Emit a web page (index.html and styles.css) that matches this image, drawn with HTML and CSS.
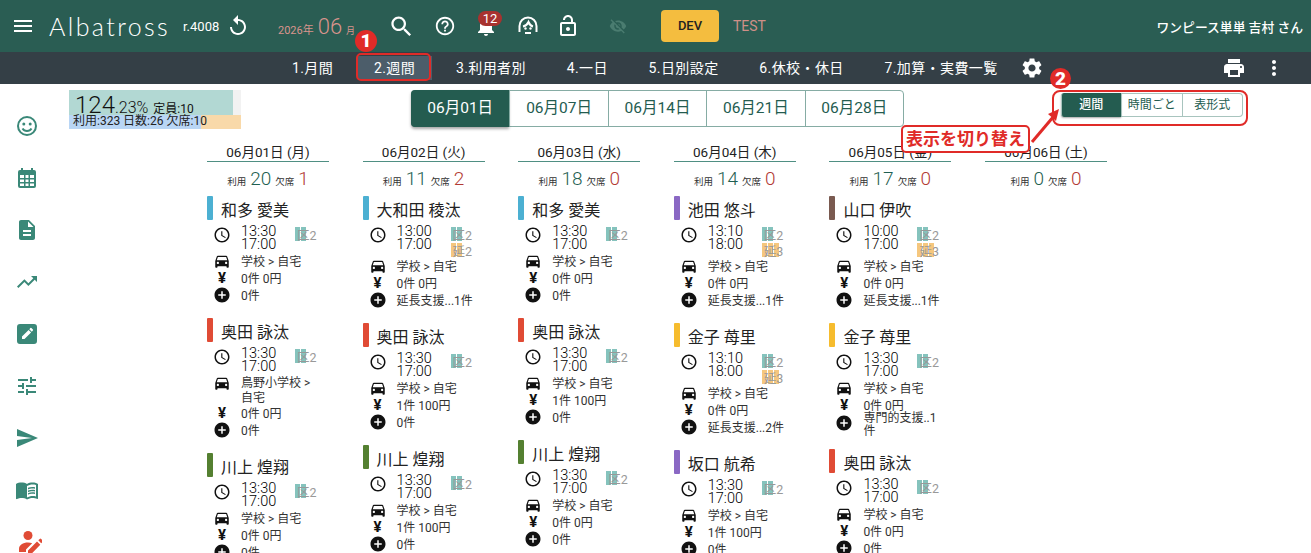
FILE: index.html
```html
<!DOCTYPE html>
<html lang="ja">
<head>
  <meta charset="UTF-8">
  <meta name="viewport" content="width=device-width, initial-scale=1.0">
  <title>Albatross 週間</title>
  <link rel="stylesheet" href="styles.css">
</head>
<body>
  <svg class="sprites" xmlns="http://www.w3.org/2000/svg">
    <symbol id="i-clock" viewBox="0 0 24 24"><path d="M11.99 2C6.47 2 2 6.48 2 12s4.47 10 9.99 10C17.52 22 22 17.52 22 12S17.52 2 11.99 2zM12 20c-4.42 0-8-3.58-8-8s3.58-8 8-8 8 3.58 8 8-3.58 8-8 8zm.5-13H11v6l5.25 3.15.75-1.23-4.5-2.67z"/></symbol>
    <symbol id="i-car" viewBox="0 0 24 24"><path d="M18.92 6.01C18.72 5.42 18.16 5 17.5 5h-11c-.66 0-1.21.42-1.42 1.01L3 12v8c0 .55.45 1 1 1h1c.55 0 1-.45 1-1v-1h12v1c0 .55.45 1 1 1h1c.55 0 1-.45 1-1v-8l-2.08-5.99zM6.5 16c-.83 0-1.5-.67-1.5-1.5S5.67 13 6.5 13s1.5.67 1.5 1.5S7.33 16 6.5 16zm11 0c-.83 0-1.5-.67-1.5-1.5s.67-1.5 1.5-1.5 1.5.67 1.5 1.5-.67 1.5-1.5 1.5zM5 11l1.5-4.5h11L19 11H5z"/></symbol>
    <symbol id="i-plus" viewBox="0 0 24 24"><path d="M12 2C6.48 2 2 6.48 2 12s4.48 10 10 10 10-4.48 10-10S17.52 2 12 2zm5 11h-4v4h-2v-4H7v-2h4V7h2v4h4v2z"/></symbol>
  </svg>

  <header class="topbar">
    <svg class="ico menu-ico" viewBox="0 0 24 24"><path d="M3 18h18v-2H3v2zm0-5h18v-2H3v2zm0-7v2h18V6H3z"/></svg>
    <span class="logo">Albatross</span>
    <span class="rev">r.4008</span>
    <svg class="ico reload-ico" viewBox="0 0 24 24"><path d="M12 5V1L7 6l5 5V7c3.31 0 6 2.69 6 6s-2.69 6-6 6-6-2.69-6-6H4c0 4.42 3.58 8 8 8s8-3.58 8-8-3.58-8-8-8z"/></svg>
    <span class="month"><span class="month-y">2026年</span> <span class="month-m">06</span> <span class="month-u">月</span></span>
    <svg class="ico search-ico" viewBox="0 0 24 24"><path d="M15.5 14h-.79l-.28-.27C15.41 12.59 16 11.11 16 9.5 16 5.91 13.09 3 9.5 3S3 5.91 3 9.5 5.91 16 9.5 16c1.61 0 3.09-.59 4.23-1.57l.27.28v.79l5 4.99L20.49 19l-4.99-5zm-6 0C7.01 14 5 11.99 5 9.5S7.01 5 9.5 5 14 7.01 14 9.5 11.99 14 9.5 14z"/></svg>
    <svg class="ico help-ico" viewBox="0 0 24 24"><path d="M11 18h2v-2h-2v2zm1-16C6.48 2 2 6.48 2 12s4.48 10 10 10 10-4.48 10-10S17.52 2 12 2zm0 18c-4.41 0-8-3.59-8-8s3.59-8 8-8 8 3.59 8 8-3.59 8-8 8zm0-14c-2.21 0-4 1.79-4 4h2c0-1.1.9-2 2-2s2 .9 2 2c0 2-3 1.75-3 5h2c0-2.25 3-2.5 3-5 0-2.21-1.79-4-4-4z"/></svg>
    <span class="bell">
      <svg class="ico" viewBox="0 0 24 24"><path d="M12 22c1.1 0 2-.9 2-2h-4c0 1.1.89 2 2 2zm6-6v-5c0-3.07-1.64-5.64-4.5-6.32V4c0-.83-.67-1.5-1.5-1.5s-1.5.67-1.5 1.5v.68C7.63 5.36 6 7.92 6 11v5l-2 2v1h16v-1l-2-2z"/></svg>
      <span class="bell-count">12</span>
    </span>
    <svg class="ico agent-ico" viewBox="0 0 24 24"><path class="line" d="M3.500 18v-6a8.500 8.500 0 0 1 17 0v6M7 12.500c2.500-.5 4.500-2.200 5.500-4.500 1 2.300 2.500 4 4.500 4.500M9 19h6"/><circle cx="9.500" cy="14.500" r="1.200"/><circle cx="14.500" cy="14.500" r="1.200"/></svg>
    <svg class="ico lock-ico" viewBox="0 0 24 24"><path d="M12 17c1.100 0 2-.9 2-2s-.9-2-2-2-2 .9-2 2 .9 2 2 2zm6-9h-1V6c0-2.760-2.240-5-5-5S7 3.240 7 6h2c0-1.660 1.340-3 3-3s3 1.340 3 3v2H6c-1.100 0-2 .9-2 2v10c0 1.100.9 2 2 2h12c1.100 0 2-.9 2-2V10c0-1.100-.9-2-2-2zm0 12H6V10h12v10z"/></svg>
    <svg class="ico eye-ico" viewBox="0 0 24 24"><path d="M12 7c2.760 0 5 2.240 5 5 0 .65-.13 1.260-.36 1.830l2.920 2.920c1.510-1.260 2.700-2.890 3.430-4.750-1.730-4.390-6-7.500-11-7.500-1.400 0-2.740.25-3.980.7l2.160 2.160C10.740 7.130 11.350 7 12 7zM2 4.270l2.280 2.280.46.46C3.080 8.300 1.780 10.020 1 12c1.730 4.390 6 7.500 11 7.500 1.550 0 3.030-.3 4.380-.84l.42.42L19.730 22 21 20.730 3.270 3 2 4.270zM7.530 9.800l1.550 1.550c-.05.21-.08.43-.08.65 0 1.660 1.340 3 3 3 .22 0 .44-.03.65-.08l1.550 1.550c-.67.33-1.410.53-2.200.53-2.760 0-5-2.240-5-5 0-.79.2-1.530.53-2.200zm4.310-.78l3.150 3.150.02-.16c0-1.660-1.340-3-3-3l-.17.01z"/></svg>
    <span class="dev-btn">DEV</span>
    <span class="test-link">TEST</span>
    <span class="user">ワンピース単単 吉村 さん</span>
  </header>

  <nav class="subnav">
    <a class="subnav-item">1.月間</a>
    <a class="subnav-item is-current">2.週間</a>
    <a class="subnav-item">3.利用者別</a>
    <a class="subnav-item">4.一日</a>
    <a class="subnav-item">5.日別設定</a>
    <a class="subnav-item">6.休校・休日</a>
    <a class="subnav-item">7.加算・実費一覧</a>
    <svg class="ico gear-ico" viewBox="0 0 24 24"><path d="M19.140 12.940c.04-.3.06-.61.06-.94 0-.32-.02-.64-.07-.94l2.030-1.580c.18-.14.23-.41.12-.61l-1.920-3.320c-.12-.22-.37-.29-.59-.22l-2.390.96c-.5-.38-1.030-.7-1.620-.94l-.36-2.540c-.04-.24-.24-.41-.48-.41h-3.840c-.24 0-.43.17-.47.41l-.36 2.540c-.59.24-1.130.57-1.620.94l-2.390-.96c-.22-.08-.47 0-.59.22L2.740 8.870c-.12.21-.08.47.12.61l2.030 1.580c-.05.3-.09.63-.09.94s.02.64.07.94l-2.030 1.580c-.18.14-.23.41-.12.61l1.920 3.320c.12.22.37.29.59.22l2.390-.96c.5.38 1.030.7 1.620.94l.36 2.540c.05.24.24.41.48.41h3.840c.24 0 .44-.17.47-.41l.36-2.540c.59-.24 1.130-.56 1.620-.94l2.390.96c.22.08.47 0 .59-.22l1.920-3.320c.12-.22.07-.47-.12-.61l-2.010-1.580zM12 15.600c-1.980 0-3.600-1.620-3.600-3.600s1.620-3.600 3.600-3.600 3.600 1.620 3.600 3.600-1.620 3.600-3.600 3.600z"/></svg>
    <svg class="ico print-ico" viewBox="0 0 24 24"><path d="M19 8H5c-1.660 0-3 1.340-3 3v6h4v4h12v-4h4v-6c0-1.660-1.340-3-3-3zm-3 11H8v-5h8v5zm3-7c-.55 0-1-.45-1-1s.45-1 1-1 1 .45 1 1-.45 1-1 1zm-1-9H6v4h12V3z"/></svg>
    <svg class="ico more-ico" viewBox="0 0 24 24"><path d="M12 8c1.100 0 2-.9 2-2s-.9-2-2-2-2 .9-2 2 .9 2 2 2zm0 2c-1.100 0-2 .9-2 2s.9 2 2 2 2-.9 2-2-.9-2-2-2zm0 6c-1.100 0-2 .9-2 2s.9 2 2 2 2-.9 2-2-.9-2-2-2z"/></svg>
  </nav>

  <div class="layout">
    <aside class="sidebar">
      <svg class="side-ico" viewBox="0 0 24 24"><circle class="line" cx="12" cy="12" r="9"/><circle cx="8.800" cy="10" r="1.500"/><circle cx="15.200" cy="10" r="1.500"/><path class="line" d="M7.500 14.500c1 1.700 2.600 2.500 4.500 2.500s3.500-.8 4.500-2.500"/></svg>
      <svg class="side-ico" viewBox="0 0 24 24"><path d="M5 4h1V2h2v2h8V2h2v2h1a2 2 0 0 1 2 2v14a2 2 0 0 1-2 2H5a2 2 0 0 1-2-2V6a2 2 0 0 1 2-2zm0 5v3h4V9H5zm5.500 0v3h3V9h-3zm4.500 0v3h4V9h-4zM5 13.500V16h4v-2.500H5zm5.500 0V16h3v-2.500h-3zm4.500 0V16h4v-2.500h-4zM5 17.500V20h4v-2.500H5zm5.500 0V20h3v-2.500h-3zm4.500 0V20h4v-2.500h-4z"/></svg>
      <svg class="side-ico" viewBox="0 0 24 24"><path d="M14 2H6c-1.100 0-1.990.9-1.990 2L4 20c0 1.100.89 2 1.990 2H18c1.100 0 2-.9 2-2V8l-6-6zm2 16H8v-2h8v2zm0-4H8v-2h8v2zm-3-5V3.500L18.500 9H13z"/></svg>
      <svg class="side-ico" viewBox="0 0 24 24"><path d="M16 6l2.290 2.290-4.880 4.880-4-4L2 16.590 3.410 18l6-6 4 4 6.300-6.290L22 12V6z"/></svg>
      <svg class="side-ico" viewBox="0 0 24 24"><path fill-rule="evenodd" d="M5 2h14a3 3 0 0 1 3 3v14a3 3 0 0 1-3 3H5a3 3 0 0 1-3-3V5a3 3 0 0 1 3-3zm2 12.500V17h2.500l6.600-6.600-2.500-2.500L7 14.500zm10.900-5.900a.7.7 0 0 0 0-1l-1.500-1.500a.7.7 0 0 0-1 0l-1.100 1.100 2.500 2.500 1.100-1.100z"/></svg>
      <svg class="side-ico" viewBox="0 0 24 24"><path d="M3 17v2h6v-2H3zM3 5v2h10V5H3zm10 16v-2h8v-2h-8v-2h-2v6h2zM7 9v2H3v2h4v2h2V9H7zm14 4v-2H11v2h10zm-6-4h2V7h4V5h-4V3h-2v6z"/></svg>
      <svg class="side-ico" viewBox="0 0 24 24"><path d="M2.010 21L23 12 2.010 3 2 10l15 2-15 2z"/></svg>
      <svg class="side-ico" viewBox="0 0 24 24"><path d="M21 5c-1.110-.35-2.330-.5-3.500-.5-1.950 0-4.050.4-5.500 1.500-1.450-1.100-3.550-1.500-5.500-1.500S2.450 4.900 1 6v14.650c0 .25.25.5.5.5.1 0 .15-.05.25-.05C3.100 20.450 5.050 20 6.500 20c1.950 0 4.050.4 5.500 1.500 1.350-.85 3.800-1.500 5.500-1.500 1.650 0 3.350.3 4.750 1.050.1.05.15.05.25.05.25 0 .5-.25.5-.5V6c-.6-.45-1.250-.75-2-1zm0 13.500c-1.100-.35-2.300-.5-3.500-.5-1.700 0-4.150.65-5.500 1.500V8c1.350-.85 3.800-1.500 5.500-1.500 1.200 0 2.400.15 3.500.5v11.500z"/><path d="M17.500 10.500c.88 0 1.730.09 2.500.26V9.240c-.79-.15-1.640-.24-2.500-.24-1.700 0-3.240.29-4.500.83v1.660c1.130-.64 2.700-.99 4.500-.99zM13 12.490v1.660c1.130-.64 2.700-.99 4.500-.99.88 0 1.730.09 2.500.26V11.900c-.79-.15-1.640-.24-2.500-.24-1.700 0-3.240.3-4.500.83zM17.500 14.330c-1.700 0-3.240.29-4.500.83v1.660c1.130-.64 2.700-.99 4.500-.99.88 0 1.730.09 2.500.26v-1.520c-.79-.16-1.640-.24-2.500-.24z"/></svg>
      <svg class="side-ico side-ico-red" viewBox="0 0 24 24"><circle cx="10" cy="5.500" r="4.500"/><path d="M1 22v-3c0-4 4-6.500 9-6.500 1.500 0 3 .2 4.200.7L8 19.500V22H1zM10 24v-3.500l9-9 3.300 3.300-9 9.200H10zM20.300 10.300l1.400-1.400a1 1 0 0 1 1.400 0l1.500 1.500a1 1 0 0 1 0 1.400l-1.400 1.400-2.900-2.900z"/></svg>
    </aside>

    <main class="content">
      <div class="toolbar">
        <div class="summary">
          <div class="summary-top">
            <div class="summary-fill"></div>
            <div class="summary-text"><span class="rate">124</span><span class="rate-sub">.23%</span> <span class="rate-cap">定員:10</span></div>
          </div>
          <div class="summary-bottom">
            <div class="summary-used"></div>
            <div class="summary-rest"></div>
            <div class="summary-text2">利用:323 日数:26 欠席:10</div>
          </div>
        </div>
        <div class="week-tabs">
          <a class="week-tab is-active">06月01日</a>
          <a class="week-tab">06月07日</a>
          <a class="week-tab">06月14日</a>
          <a class="week-tab">06月21日</a>
          <a class="week-tab">06月28日</a>
        </div>
        <div class="view-switch">
          <a class="view-tab is-active">週間</a>
          <a class="view-tab">時間ごと</a>
          <a class="view-tab">表形式</a>
        </div>
      </div>

      <div class="week">
        <section class="day">
          <div class="day-head">06月01日 (月)</div>
          <div class="day-stat"><small>利用</small> <b class="ok">20</b> <small>欠席</small> <b class="ng">1</b></div>

          <article class="kid">
            <h3 class="kid-name"><i class="tag c-blue"></i>和多 愛美</h3>
            <div class="kid-time"><svg class="row-ico"><use href="#i-clock"/></svg><span class="times">13:30<br>17:00</span><span class="marks"><span class="mark m-ku">区2</span></span></div>
            <div class="kid-row"><svg class="row-ico"><use href="#i-car"/></svg><span>学校 &gt; 自宅</span></div>
            <div class="kid-row"><span class="row-yen">¥</span><span>0件 0円</span></div>
            <div class="kid-row"><svg class="row-ico"><use href="#i-plus"/></svg><span>0件</span></div>
          </article>

          <article class="kid">
            <h3 class="kid-name"><i class="tag c-red"></i>奥田 詠汰</h3>
            <div class="kid-time"><svg class="row-ico"><use href="#i-clock"/></svg><span class="times">13:30<br>17:00</span><span class="marks"><span class="mark m-ku">区2</span></span></div>
            <div class="kid-row kid-row-wrap"><svg class="row-ico"><use href="#i-car"/></svg><span>鳥野小学校 &gt; 自宅</span></div>
            <div class="kid-row"><span class="row-yen">¥</span><span>0件 0円</span></div>
            <div class="kid-row"><svg class="row-ico"><use href="#i-plus"/></svg><span>0件</span></div>
          </article>

          <article class="kid">
            <h3 class="kid-name"><i class="tag c-green"></i>川上 煌翔</h3>
            <div class="kid-time"><svg class="row-ico"><use href="#i-clock"/></svg><span class="times">13:30<br>17:00</span><span class="marks"><span class="mark m-ku">区2</span></span></div>
            <div class="kid-row"><svg class="row-ico"><use href="#i-car"/></svg><span>学校 &gt; 自宅</span></div>
            <div class="kid-row"><span class="row-yen">¥</span><span>0件 0円</span></div>
            <div class="kid-row"><svg class="row-ico"><use href="#i-plus"/></svg><span>0件</span></div>
          </article>
        </section>

        <section class="day">
          <div class="day-head">06月02日 (火)</div>
          <div class="day-stat"><small>利用</small> <b class="ok">11</b> <small>欠席</small> <b class="ng">2</b></div>

          <article class="kid">
            <h3 class="kid-name"><i class="tag c-blue"></i>大和田 稜汰</h3>
            <div class="kid-time"><svg class="row-ico"><use href="#i-clock"/></svg><span class="times">13:00<br>17:00</span><span class="marks"><span class="mark m-ku">区2</span><span class="mark m-en2">延2</span></span></div>
            <div class="kid-row"><svg class="row-ico"><use href="#i-car"/></svg><span>学校 &gt; 自宅</span></div>
            <div class="kid-row"><span class="row-yen">¥</span><span>0件 0円</span></div>
            <div class="kid-row"><svg class="row-ico"><use href="#i-plus"/></svg><span>延長支援...1件</span></div>
          </article>

          <article class="kid">
            <h3 class="kid-name"><i class="tag c-red"></i>奥田 詠汰</h3>
            <div class="kid-time"><svg class="row-ico"><use href="#i-clock"/></svg><span class="times">13:30<br>17:00</span><span class="marks"><span class="mark m-ku">区2</span></span></div>
            <div class="kid-row"><svg class="row-ico"><use href="#i-car"/></svg><span>学校 &gt; 自宅</span></div>
            <div class="kid-row"><span class="row-yen">¥</span><span>1件 100円</span></div>
            <div class="kid-row"><svg class="row-ico"><use href="#i-plus"/></svg><span>0件</span></div>
          </article>

          <article class="kid">
            <h3 class="kid-name"><i class="tag c-green"></i>川上 煌翔</h3>
            <div class="kid-time"><svg class="row-ico"><use href="#i-clock"/></svg><span class="times">13:30<br>17:00</span><span class="marks"><span class="mark m-ku">区2</span></span></div>
            <div class="kid-row"><svg class="row-ico"><use href="#i-car"/></svg><span>学校 &gt; 自宅</span></div>
            <div class="kid-row"><span class="row-yen">¥</span><span>1件 100円</span></div>
            <div class="kid-row"><svg class="row-ico"><use href="#i-plus"/></svg><span>0件</span></div>
          </article>
        </section>

        <section class="day">
          <div class="day-head">06月03日 (水)</div>
          <div class="day-stat"><small>利用</small> <b class="ok">18</b> <small>欠席</small> <b class="ng">0</b></div>

          <article class="kid">
            <h3 class="kid-name"><i class="tag c-blue"></i>和多 愛美</h3>
            <div class="kid-time"><svg class="row-ico"><use href="#i-clock"/></svg><span class="times">13:30<br>17:00</span><span class="marks"><span class="mark m-ku">区2</span></span></div>
            <div class="kid-row"><svg class="row-ico"><use href="#i-car"/></svg><span>学校 &gt; 自宅</span></div>
            <div class="kid-row"><span class="row-yen">¥</span><span>0件 0円</span></div>
            <div class="kid-row"><svg class="row-ico"><use href="#i-plus"/></svg><span>0件</span></div>
          </article>

          <article class="kid">
            <h3 class="kid-name"><i class="tag c-red"></i>奥田 詠汰</h3>
            <div class="kid-time"><svg class="row-ico"><use href="#i-clock"/></svg><span class="times">13:30<br>17:00</span><span class="marks"><span class="mark m-ku">区2</span></span></div>
            <div class="kid-row"><svg class="row-ico"><use href="#i-car"/></svg><span>学校 &gt; 自宅</span></div>
            <div class="kid-row"><span class="row-yen">¥</span><span>1件 100円</span></div>
            <div class="kid-row"><svg class="row-ico"><use href="#i-plus"/></svg><span>0件</span></div>
          </article>

          <article class="kid">
            <h3 class="kid-name"><i class="tag c-green"></i>川上 煌翔</h3>
            <div class="kid-time"><svg class="row-ico"><use href="#i-clock"/></svg><span class="times">13:30<br>17:00</span><span class="marks"><span class="mark m-ku">区2</span></span></div>
            <div class="kid-row"><svg class="row-ico"><use href="#i-car"/></svg><span>学校 &gt; 自宅</span></div>
            <div class="kid-row"><span class="row-yen">¥</span><span>0件 0円</span></div>
            <div class="kid-row"><svg class="row-ico"><use href="#i-plus"/></svg><span>0件</span></div>
          </article>
        </section>

        <section class="day">
          <div class="day-head">06月04日 (木)</div>
          <div class="day-stat"><small>利用</small> <b class="ok">14</b> <small>欠席</small> <b class="ng">0</b></div>

          <article class="kid">
            <h3 class="kid-name"><i class="tag c-purple"></i>池田 悠斗</h3>
            <div class="kid-time"><svg class="row-ico"><use href="#i-clock"/></svg><span class="times">13:10<br>18:00</span><span class="marks"><span class="mark m-ku">区2</span><span class="mark m-en3">延3</span></span></div>
            <div class="kid-row"><svg class="row-ico"><use href="#i-car"/></svg><span>学校 &gt; 自宅</span></div>
            <div class="kid-row"><span class="row-yen">¥</span><span>0件 0円</span></div>
            <div class="kid-row"><svg class="row-ico"><use href="#i-plus"/></svg><span>延長支援...1件</span></div>
          </article>

          <article class="kid">
            <h3 class="kid-name"><i class="tag c-yellow"></i>金子 苺里</h3>
            <div class="kid-time"><svg class="row-ico"><use href="#i-clock"/></svg><span class="times">13:10<br>18:00</span><span class="marks"><span class="mark m-ku">区2</span><span class="mark m-en3">延3</span></span></div>
            <div class="kid-row"><svg class="row-ico"><use href="#i-car"/></svg><span>学校 &gt; 自宅</span></div>
            <div class="kid-row"><span class="row-yen">¥</span><span>0件 0円</span></div>
            <div class="kid-row"><svg class="row-ico"><use href="#i-plus"/></svg><span>延長支援...2件</span></div>
          </article>

          <article class="kid">
            <h3 class="kid-name"><i class="tag c-purple"></i>坂口 航希</h3>
            <div class="kid-time"><svg class="row-ico"><use href="#i-clock"/></svg><span class="times">13:30<br>17:00</span><span class="marks"><span class="mark m-ku">区2</span></span></div>
            <div class="kid-row"><svg class="row-ico"><use href="#i-car"/></svg><span>学校 &gt; 自宅</span></div>
            <div class="kid-row"><span class="row-yen">¥</span><span>1件 100円</span></div>
            <div class="kid-row"><svg class="row-ico"><use href="#i-plus"/></svg><span>0件</span></div>
          </article>
        </section>

        <section class="day">
          <div class="day-head">06月05日 (金)</div>
          <div class="day-stat"><small>利用</small> <b class="ok">17</b> <small>欠席</small> <b class="ng">0</b></div>

          <article class="kid">
            <h3 class="kid-name"><i class="tag c-brown"></i>山口 伊吹</h3>
            <div class="kid-time"><svg class="row-ico"><use href="#i-clock"/></svg><span class="times">10:00<br>17:00</span><span class="marks"><span class="mark m-ku">区2</span><span class="mark m-en3">延3</span></span></div>
            <div class="kid-row"><svg class="row-ico"><use href="#i-car"/></svg><span>学校 &gt; 自宅</span></div>
            <div class="kid-row"><span class="row-yen">¥</span><span>0件 0円</span></div>
            <div class="kid-row"><svg class="row-ico"><use href="#i-plus"/></svg><span>延長支援...1件</span></div>
          </article>

          <article class="kid">
            <h3 class="kid-name"><i class="tag c-yellow"></i>金子 苺里</h3>
            <div class="kid-time"><svg class="row-ico"><use href="#i-clock"/></svg><span class="times">13:30<br>17:00</span><span class="marks"><span class="mark m-ku">区2</span></span></div>
            <div class="kid-row"><svg class="row-ico"><use href="#i-car"/></svg><span>学校 &gt; 自宅</span></div>
            <div class="kid-row"><span class="row-yen">¥</span><span>0件 0円</span></div>
            <div class="kid-row kid-row-tight"><svg class="row-ico"><use href="#i-plus"/></svg><span>専門的支援..1件</span></div>
          </article>

          <article class="kid">
            <h3 class="kid-name"><i class="tag c-red"></i>奥田 詠汰</h3>
            <div class="kid-time"><svg class="row-ico"><use href="#i-clock"/></svg><span class="times">13:30<br>17:00</span><span class="marks"><span class="mark m-ku">区2</span></span></div>
            <div class="kid-row"><svg class="row-ico"><use href="#i-car"/></svg><span>学校 &gt; 自宅</span></div>
            <div class="kid-row"><span class="row-yen">¥</span><span>0件 0円</span></div>
            <div class="kid-row"><svg class="row-ico"><use href="#i-plus"/></svg><span>0件</span></div>
          </article>
        </section>

        <section class="day">
          <div class="day-head">06月06日 (土)</div>
          <div class="day-stat"><small>利用</small> <b class="ok">0</b> <small>欠席</small> <b class="ng">0</b></div>
        </section>
      </div>
    </main>
  </div>

  <!-- 注釈 (説明用の赤い書き込み) -->
  <span class="note-num note-num-1">1</span>
  <span class="note-ring note-ring-1"></span>
  <span class="note-num note-num-2">2</span>
  <span class="note-ring note-ring-2"></span>
  <span class="note-label">表示を切り替え</span>
  <svg class="note-arrow" viewBox="0 0 32 36"><path d="M2 34L24 8" /><path class="arrow-head" d="M29 1l-11 5 8 7z"/></svg>
</body>
</html>
```

FILE: styles.css
```css
* {
  box-sizing: border-box;
}

html, body {
  margin: 0;
  padding: 0;
  height: 100%;
  overflow: hidden;
  background-color: #fff;
  color: #222;
  font-family: Roboto, "Noto Sans CJK JP", sans-serif;
}

.sprites {
  display: none;
}

.ico {
  display: block;
  flex-shrink: 0;
  fill: #fff;
}

.ico .line,
.side-ico .line {
  fill: none;
  stroke: currentColor;
  stroke-width: 2;
}

/* header */
.topbar {
  display: flex;
  align-items: center;
  height: 52px;
  padding-left: 11px;
  background-color: #2a5d53;
  color: #fff;
}

.menu-ico { width: 24px; height: 24px; }

.logo {
  flex-shrink: 0;
  width: 134px;
  margin-left: 14px;
  font-family: Lato, sans-serif;
  font-weight: 300;
  font-size: 25px;
  letter-spacing: 2.4px;
}

.rev {
  flex-shrink: 0;
  width: 43px;
  font-size: 13px;
}

.reload-ico { width: 24px; height: 24px; }

.month {
  flex-shrink: 0;
  width: 110px;
  margin-left: 28px;
  color: #d9948d;
  white-space: nowrap;
}

.month-y { font-size: 11px; }
.month-m { font-size: 22px; font-weight: 300; }
.month-u { font-size: 9px; }

.search-ico { width: 27px; height: 27px; }
.help-ico { width: 22px; height: 22px; margin-left: 19px; }

.bell {
  position: relative;
  flex-shrink: 0;
  margin-left: 18px;
}

.bell .ico { width: 24px; height: 24px; }

.bell-count {
  position: absolute;
  left: 4px;
  top: -3px;
  width: 24px;
  height: 15px;
  border-radius: 8px;
  background-color: #a8322f;
  font-size: 13px;
  line-height: 15px;
  text-align: center;
}

.agent-ico { width: 24px; height: 24px; margin-left: 18px; color: #fff; }
.lock-ico { width: 24px; height: 24px; margin-left: 16px; }
.eye-ico { width: 18px; height: 18px; margin-left: 29px; fill: #4a7c70; }

.dev-btn {
  flex-shrink: 0;
  width: 58px;
  height: 32px;
  margin-left: 34px;
  border-radius: 4px;
  background-color: #f4bd3f;
  color: #222;
  font-size: 13px;
  font-weight: 500;
  line-height: 32px;
  text-align: center;
}

.test-link {
  margin-left: 14px;
  color: #cf8f88;
  font-size: 14px;
}

.user {
  margin-left: auto;
  margin-right: 8px;
  font-size: 12.8px;
  font-weight: 500;
}

/* sub navigation */
.subnav {
  display: flex;
  align-items: center;
  height: 32px;
  padding-left: 271.6px;
  background-color: #343f46;
  color: #fff;
}

.subnav-item {
  padding: 0 20.4px;
  font-size: 14px;
  line-height: 24px;
  letter-spacing: .4px;
  white-space: nowrap;
}

.subnav-item.is-current {
  margin: 0 4px;
  padding: 0 16.4px;
  background-color: #4c5d6a;
}

.gear-ico { width: 24px; height: 24px; margin-left: 2px; }
.print-ico { width: 24px; height: 24px; margin-left: auto; }
.more-ico { width: 24px; height: 24px; margin: 0 25px 0 16px; }

/* page body */
.layout {
  display: flex;
}

.sidebar {
  display: flex;
  flex-direction: column;
  flex-shrink: 0;
  width: 69px;
  padding: 16px 0 0 15px;
}

.side-ico {
  display: block;
  flex-shrink: 0;
  width: 24px;
  height: 24px;
  margin-top: 14px;
  margin-bottom: 14px;
  color: #3a8878;
  fill: #3a8878;
}

.side-ico-red {
  margin-left: 3px;
  fill: #e04b35;
}

.content {
  flex: 1;
  min-width: 0;
}

.toolbar {
  display: flex;
  align-items: flex-start;
  height: 59px;
  padding-top: 6px;
}

.summary {
  flex-shrink: 0;
  width: 172px;
  height: 40px;
  font-size: 12px;
}

.summary-top {
  position: relative;
  height: 25px;
  background-color: #f2f2f2;
}

.summary-fill {
  width: 164px;
  height: 25px;
  background-color: #b2d8d3;
}

.summary-text {
  position: absolute;
  left: 6px;
  top: 0;
  color: #111;
  line-height: 30px;
  white-space: nowrap;
}

.rate { font-size: 24px; font-weight: 300; }
.rate-sub { font-size: 16px; font-weight: 300; }
.rate-cap { font-size: 12px; margin-left: 2px; }

.summary-bottom {
  position: relative;
  display: flex;
  height: 14px;
}

.summary-used { width: 132px; background-color: #b9d6f5; }
.summary-rest { width: 40px; background-color: #f9d9a9; }

.summary-text2 {
  position: absolute;
  left: 4px;
  top: -1px;
  font-size: 12px;
  line-height: 15px;
  white-space: nowrap;
}

.week-tabs {
  display: flex;
  flex-shrink: 0;
  height: 37px;
  margin-left: 170px;
  border: 1px solid #86aca4;
  border-radius: 4px;
}

.week-tab {
  width: 98.4px;
  border-left: 1px solid #86aca4;
  color: #245c50;
  font-size: 15.5px;
  line-height: 35px;
  text-align: center;
}

.week-tab:first-child { border-left: 0; }

.week-tab.is-active {
  margin: -1px 0 -1px -1px;
  height: 37px;
  border-radius: 4px 0 0 4px;
  background-color: #245c50;
  box-shadow: 0 2px 3px rgba(0, 0, 0, .35);
  color: #fff;
  line-height: 37px;
}

.view-switch {
  display: flex;
  height: 24px;
  margin: 3px 68px 0 auto;
  border: 1px solid #a8c4be;
  border-left: 0;
  border-radius: 4px;
}

.view-tab {
  width: 60.5px;
  border-left: 1px solid #a8c4be;
  color: #245c50;
  font-size: 12px;
  line-height: 22px;
  text-align: center;
}

.view-tab.is-active {
  margin: -1px 0;
  height: 24px;
  border-radius: 3px 0 0 3px;
  background-color: #245c50;
  box-shadow: 0 1px 2px rgba(0, 0, 0, .35);
  color: #fff;
  font-weight: 500;
  line-height: 24px;
}

/* week grid */
.week {
  display: grid;
  grid-template-columns: repeat(6, 122px);
  column-gap: 33.6px;
  margin-left: 138px;
}

.day-head {
  height: 19px;
  border-bottom: 1px solid #4f8f83;
  font-size: 13.5px;
  line-height: 18px;
  text-align: center;
}

.day-stat {
  height: 34px;
  padding-top: 5px;
  font-size: 16px;
  line-height: 24px;
  text-align: center;
}

.day-stat small { font-size: 9.5px; color: #333; }
.day-stat b { font-weight: 300; font-size: 19px; }
.day-stat .ok { color: #1f5f52; }
.day-stat .ng { color: #b23a34; }

.kid {
  margin-bottom: 15px;
  font-size: 12px;
}

.kid-name {
  display: flex;
  align-items: center;
  height: 24px;
  margin: 0 0 6px;
  padding-top: 2px;
  font-size: 16px;
  font-weight: 400;
}

.tag {
  width: 6px;
  height: 24px;
  margin: -2px 8px 0 0;
  border-radius: 1px;
}

.c-blue { background-color: #4cb0d2; }
.c-red { background-color: #e04b35; }
.c-green { background-color: #548031; }
.c-purple { background-color: #8a68c4; }
.c-yellow { background-color: #f6bc2e; }
.c-brown { background-color: #7a5a50; }

.kid-time {
  display: flex;
  align-items: flex-start;
  min-height: 26px;
  padding-left: 6px;
}

.times {
  flex-shrink: 0;
  width: 54px;
  margin-top: -1px;
  color: #000;
  font-size: 14.5px;
  font-weight: 300;
  line-height: 13px;
}

.marks {
  display: flex;
  flex-direction: column;
  gap: 2px;
  margin-top: 1px;
}

.mark {
  display: block;
  width: 22px;
  height: 14px;
  padding-left: 2px;
  color: #999;
  font-size: 12.5px;
  line-height: 17px;
  background-repeat: no-repeat;
  background-size: 11px 14px;
}

.m-ku {
  background-image: linear-gradient(90deg, #85c3bd 5px, #fff 5px, #fff 6px, #85c3bd 6px);
}

.m-en2 {
  background-image: linear-gradient(90deg, #f5c77e 5px, #fff 5px, #fff 6px, #f5c77e 6px);
}

.m-en3 {
  background-size: 17px 14px;
  background-image: linear-gradient(90deg, #f5c77e 5px, #fff 5px, #fff 6px, #f5c77e 6px, #f5c77e 11px, #fff 11px, #fff 12px, #f5c77e 12px);
}

.row-ico {
  display: block;
  flex-shrink: 0;
  width: 18px;
  height: 18px;
  margin-right: 10px;
  fill: #111;
}

.kid-row {
  display: flex;
  align-items: flex-start;
  height: 17px;
  padding-left: 6px;
  line-height: 17px;
  color: #333;
}

.kid-row .row-ico {
  margin-top: -.5px;
}

.kid-row > span:last-child {
  max-width: 82px;
  margin-top: 1.5px;
}

.kid-row-wrap {
  height: 30px;
  line-height: 15px;
}

.kid-row-tight {
  height: 21px;
  line-height: 13px;
}

.kid-row-tight .row-ico {
  margin-top: 1px;
}

.kid-row-tight > span:last-child {
  margin-top: -1px;
}

.row-yen {
  flex-shrink: 0;
  width: 18px;
  margin-top: 1px;
  margin-right: 10px;
  color: #111;
  font-size: 15px;
  font-weight: 700;
  text-align: center;
}

/* annotations */
.note-num {
  position: absolute;
  width: 22px;
  height: 22px;
  border-radius: 50%;
  background-color: #e02b28;
  color: #fff;
  font-size: 19px;
  font-weight: 900;
  line-height: 22px;
  text-align: center;
}

.note-num-1 { left: 355px; top: 30px; }
.note-num-2 { left: 1050px; top: 68px; width: 21px; height: 21px; line-height: 21px; }

.note-ring {
  position: absolute;
  border: 2px solid #e02b28;
  border-radius: 5px;
}

.note-ring-1 { left: 356px; top: 53px; width: 75px; height: 28px; }
.note-ring-2 { left: 1052px; top: 90px; width: 196px; height: 36px; border-radius: 8px; }

.note-label {
  position: absolute;
  left: 901px;
  top: 125px;
  width: 129px;
  height: 28px;
  border: 2px solid #e02b28;
  border-radius: 5px;
  background-color: #fff;
  color: #e02b28;
  font-size: 17px;
  font-weight: 700;
  line-height: 24px;
  text-align: center;
  white-space: nowrap;
}

.note-arrow {
  position: absolute;
  left: 1030px;
  top: 108px;
  width: 32px;
  height: 36px;
  fill: none;
  stroke: #e02b28;
  stroke-width: 3;
}

.note-arrow .arrow-head {
  fill: #e02b28;
  stroke: none;
}
```
